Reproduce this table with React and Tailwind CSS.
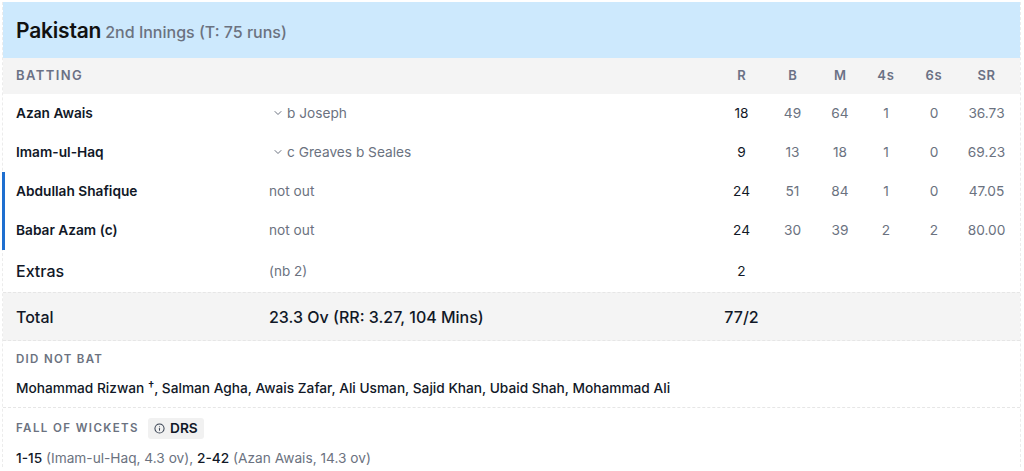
import { ChevronDown, Info } from "lucide-react";

const batters = [
  { name: "Azan Awais", out: "b Joseph", r: 18, b: 49, m: 64, fours: 1, sixes: 0, sr: "36.73", dismissed: true },
  { name: "Imam-ul-Haq", out: "c Greaves b Seales", r: 9, b: 13, m: 18, fours: 1, sixes: 0, sr: "69.23", dismissed: true },
  { name: "Abdullah Shafique", out: "not out", r: 24, b: 51, m: 84, fours: 1, sixes: 0, sr: "47.05", dismissed: false },
  { name: "Babar Azam (c)", out: "not out", r: 24, b: 30, m: 39, fours: 2, sixes: 2, sr: "80.00", dismissed: false },
];

// shared column template for the batting table
const cols = "grid grid-cols-[253px_1fr_53px_49px_46px_46px_50px_55px] items-center pl-[13px] pr-[6px]";

function BatterRow({ p }) {
  return (
    <div className={`${cols} h-[39px] relative`}>
      {!p.dismissed && <div className="absolute left-[-1px] top-0 bottom-0 w-[3px] bg-[#1e6fd0]" />}
      <div className="text-[13.7px] font-semibold text-[#111827]">{p.name}</div>
      <div className="text-[13.7px] text-[#6b7280] flex items-center">
        {p.dismissed ? (
          <>
            <ChevronDown size={12} strokeWidth={2} className="ml-[3px] mr-[3px] text-[#6b7280]" />
            {p.out}
          </>
        ) : (
          p.out
        )}
      </div>
      <div className="text-center text-[13.7px] text-[#111827]">{p.r}</div>
      <div className="text-center text-[13.7px] text-[#6b7280]">{p.b}</div>
      <div className="text-center text-[13.7px] text-[#6b7280]">{p.m}</div>
      <div className="text-center text-[13.7px] text-[#6b7280]">{p.fours}</div>
      <div className="text-center text-[13.7px] text-[#6b7280]">{p.sixes}</div>
      <div className="text-center text-[13.7px] text-[#6b7280]">{p.sr}</div>
    </div>
  );
}

export default function App() {
  return (
    <div className="bg-white h-[471px] pt-[2px] pl-[2px] pr-[3px] font-['Inter',sans-serif] overflow-hidden">
      <div className="border-x border-dashed border-[#ececec]">
        <div className="bg-[#cde9fd] h-[56px] flex items-baseline pl-[13px] pt-[13px]">
          <span className="text-[21px] font-semibold text-[#111] tracking-[-0.2px]">Pakistan</span>
          <span className="ml-[4px] text-[16px] font-medium text-[#6b7280]">2nd Innings (T: 75 runs)</span>
        </div>

        <div className={`${cols} h-[36px] bg-[#f4f4f4] text-[13px] font-semibold text-[#6b7185]`}>
          <div className="tracking-[1.4px]">BATTING</div>
          <div />
          <div className="text-center">R</div>
          <div className="text-center">B</div>
          <div className="text-center">M</div>
          <div className="text-center tracking-[0.8px]">4s</div>
          <div className="text-center tracking-[0.8px]">6s</div>
          <div className="text-center tracking-[0.5px]">SR</div>
        </div>

        {batters.map((p) => (
          <BatterRow key={p.name} p={p} />
        ))}

        <div className={`${cols} h-[42px]`}>
          <div className="text-[16px] font-medium text-[#111827]">Extras</div>
          <div className="text-[13.5px] text-[#6b7280]">(nb 2)</div>
          <div className="text-center text-[13.7px] text-[#111827]">2</div>
        </div>

        <div className={`${cols} h-[49px] bg-[#f4f4f4] border-y border-dashed border-[#e6e6e6]`}>
          <div className="text-[16px] font-medium text-[#111827]">Total</div>
          <div className="text-[16px] font-medium text-[#111827]">23.3 Ov (RR: 3.27, 104 Mins)</div>
          <div className="text-center text-[16px] font-medium text-[#111827]">77/2</div>
        </div>

        <div className="pl-[13px] pt-[11px] pb-[10px] border-b border-dashed border-[#e6e6e6]">
          <div className="text-[11.5px] font-semibold tracking-[1.3px] text-[#6b7280] h-[14px] leading-[14px]">
            DID NOT BAT
          </div>
          <div className="mt-[13px] text-[13.7px] font-medium text-[#111827] leading-[18px]">
            Mohammad Rizwan <span className="text-[12px] align-top leading-[14px]">†</span>, Salman Agha, Awais Zafar, Ali Usman, Sajid Khan, Ubaid Shah, Mohammad Ali
          </div>
        </div>

        <div className="pl-[13px] pt-[10px]">
          <div className="flex items-center h-[21px]">
            <span className="text-[11.5px] font-semibold tracking-[1.4px] text-[#6b7280]">FALL OF WICKETS</span>
            <span className="ml-[9px] flex items-center gap-[5px] bg-[#f1f1f1] rounded-[3px] px-[6px] h-[21px] text-[13.7px] font-semibold text-[#111827]">
              <Info size={11} strokeWidth={2.2} className="text-[#374151]" />
              DRS
            </span>
          </div>
          <div className="mt-[10px] text-[13.7px] leading-[18px]">
            <span className="font-medium text-[#111827]">1-15</span>
            <span className="text-[#6b7280]"> (Imam-ul-Haq, 4.3 ov), </span>
            <span className="font-medium text-[#111827]">2-42</span>
            <span className="text-[#6b7280]"> (Azan Awais, 14.3 ov)</span>
          </div>
        </div>
      </div>
    </div>
  );
}
